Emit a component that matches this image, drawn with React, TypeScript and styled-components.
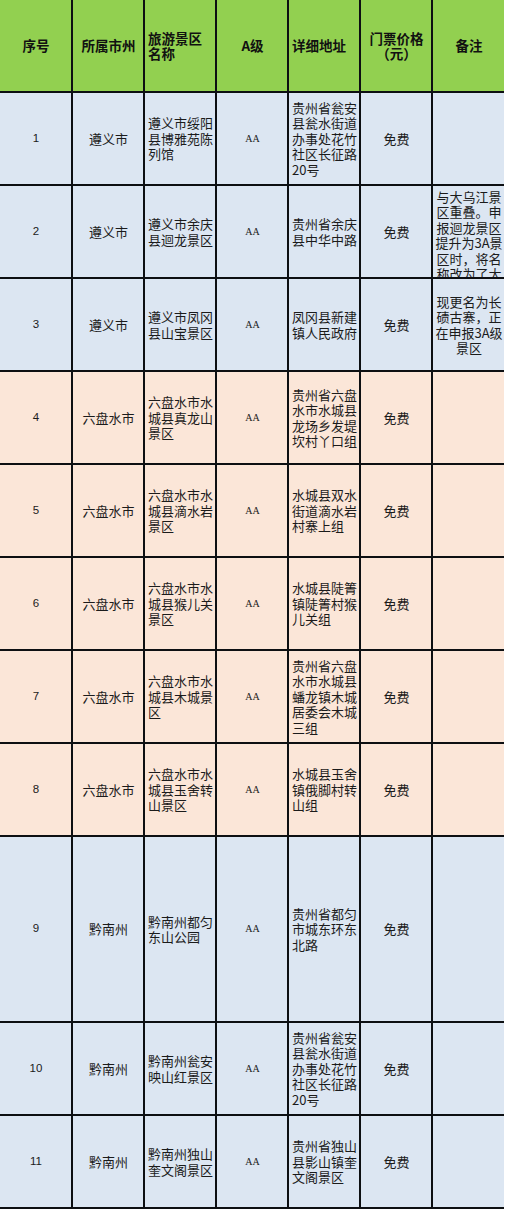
import { styled, createGlobalStyle } from "styled-components";

type Tone = "blue" | "pink";
type Align = "center" | "left";

interface Spot {
  no: number;
  city: string;
  name: string[];
  address: string[];
  note?: string[];
  tone: Tone;
  tall?: boolean;
  clipNote?: boolean;
}

const GlobalStyle = createGlobalStyle`
  html, body {
    margin: 0;
    padding: 0;
    background: #ffffff;
  }
  body {
    font-family: "Noto Sans CJK SC", "Liberation Sans", sans-serif;
    color: #1b1b1b;
  }
`;

const spots: Spot[] = [
  {
    no: 1,
    city: "遵义市",
    name: ["遵义市绥阳", "县博雅苑陈", "列馆"],
    address: ["贵州省瓮安", "县瓮水街道", "办事处花竹", "社区长征路", "20号"],
    tone: "blue",
  },
  {
    no: 2,
    city: "遵义市",
    name: ["遵义市余庆", "县迴龙景区"],
    address: ["贵州省余庆", "县中华中路"],
    note: ["与大乌江景", "区重叠。申", "报迴龙景区", "提升为3A景", "区时，将名", "称改为了大", "乌江景区"],
    clipNote: true,
    tone: "blue",
  },
  {
    no: 3,
    city: "遵义市",
    name: ["遵义市凤冈", "县山宝景区"],
    address: ["凤冈县新建", "镇人民政府"],
    note: ["现更名为长", "碛古寨，正", "在申报3A级", "景区"],
    tone: "blue",
  },
  {
    no: 4,
    city: "六盘水市",
    name: ["六盘水市水", "城县真龙山", "景区"],
    address: ["贵州省六盘", "水市水城县", "龙场乡发堤", "坎村丫口组"],
    tone: "pink",
  },
  {
    no: 5,
    city: "六盘水市",
    name: ["六盘水市水", "城县滴水岩", "景区"],
    address: ["水城县双水", "街道滴水岩", "村寨上组"],
    tone: "pink",
  },
  {
    no: 6,
    city: "六盘水市",
    name: ["六盘水市水", "城县猴儿关", "景区"],
    address: ["水城县陡箐", "镇陡箐村猴", "儿关组"],
    tone: "pink",
  },
  {
    no: 7,
    city: "六盘水市",
    name: ["六盘水市水", "城县木城景", "区"],
    address: ["贵州省六盘", "水市水城县", "蟠龙镇木城", "居委会木城", "三组"],
    tone: "pink",
  },
  {
    no: 8,
    city: "六盘水市",
    name: ["六盘水市水", "城县玉舍转", "山景区"],
    address: ["水城县玉舍", "镇俄脚村转", "山组"],
    tone: "pink",
  },
  {
    no: 9,
    city: "黔南州",
    name: ["黔南州都匀", "东山公园"],
    address: ["贵州省都匀", "市城东环东", "北路"],
    tone: "blue",
    tall: true,
  },
  {
    no: 10,
    city: "黔南州",
    name: ["黔南州瓮安", "映山红景区"],
    address: ["贵州省瓮安", "县瓮水街道", "办事处花竹", "社区长征路", "20号"],
    tone: "blue",
  },
  {
    no: 11,
    city: "黔南州",
    name: ["黔南州独山", "奎文阁景区"],
    address: ["贵州省独山", "县影山镇奎", "文阁景区"],
    tone: "blue",
  },
];

const headers: { lines: string[]; align: Align }[] = [
  { lines: ["序号"], align: "center" },
  { lines: ["所属市州"], align: "center" },
  { lines: ["旅游景区", "名称"], align: "left" },
  { lines: ["A级"], align: "center" },
  { lines: ["详细地址"], align: "left" },
  { lines: ["门票价格", "（元）"], align: "center" },
  { lines: ["备注"], align: "center" },
];

export default function App() {
  return (
    <>
      <GlobalStyle />
      <Sheet>
        <Row $height={91}>
          {headers.map((h) => (
            <HeaderCell key={h.lines[0]} $align={h.align}>
              {h.lines.map((l) => (
                <Line key={l}>{l}</Line>
              ))}
            </HeaderCell>
          ))}
        </Row>
        {spots.map((s) => (
          <Row key={s.no} $height={s.tall ? 184 : 91}>
            <Cell $tone={s.tone} $align="center">
              <Num>{s.no}</Num>
            </Cell>
            <Cell $tone={s.tone} $align="center">
              <Line>{s.city}</Line>
            </Cell>
            <Cell $tone={s.tone} $align="left">
              {s.name.map((l) => (
                <Line key={l}>{l}</Line>
              ))}
            </Cell>
            <Cell $tone={s.tone} $align="center">
              <Grade>AA</Grade>
            </Cell>
            <Cell $tone={s.tone} $align="left">
              {s.address.map((l) => (
                <Line key={l}>{l}</Line>
              ))}
            </Cell>
            <Cell $tone={s.tone} $align="center">
              <Line>免费</Line>
            </Cell>
            <Cell $tone={s.tone} $align="center" $top={s.clipNote}>
              {s.note?.map((l) => (
                <Line key={l}>{l}</Line>
              ))}
            </Cell>
          </Row>
        ))}
      </Sheet>
    </>
  );
}

const Sheet = styled.div`
  width: 504px;
  display: flex;
  flex-direction: column;
  gap: 2px;
  padding-bottom: 2px;
  background: #0d0f12;
`;

const Row = styled.div<{ $height: number }>`
  display: grid;
  grid-template-columns: 71px 70px 70px 70px 70px 70px 71px;
  column-gap: 2px;
  height: ${(p) => p.$height}px;
`;

const Cell = styled.div<{ $tone: Tone; $align: Align; $top?: boolean }>`
  display: flex;
  flex-direction: column;
  justify-content: ${(p) => (p.$top ? "flex-start" : "center")};
  align-items: ${(p) => (p.$align === "center" ? "center" : "flex-start")};
  padding: ${(p) => (p.$top ? "3px" : "0")} 2px 0 3px;
  overflow: hidden;
  background: ${(p) => (p.$tone === "blue" ? "#dce6f2" : "#fbe6d8")};
  font-size: 13px;
  line-height: 15.4px;
  color: #1b1b1b;
`;

const HeaderCell = styled.div<{ $align: Align }>`
  display: flex;
  flex-direction: column;
  justify-content: center;
  align-items: ${(p) => (p.$align === "center" ? "center" : "flex-start")};
  padding: 0 2px 0 3px;
  background: #92d050;
  font-size: 13.5px;
  line-height: 15px;
  font-weight: 700;
  color: #111;
`;

const Line = styled.span`
  display: block;
  white-space: nowrap;
  text-align: center;
`;

const Num = styled.span`
  font-family: "Liberation Sans", Arial, sans-serif;
  font-size: 11.5px;
`;

const Grade = styled.span`
  font-family: "Liberation Serif", "Times New Roman", serif;
  font-size: 10px;
`;
